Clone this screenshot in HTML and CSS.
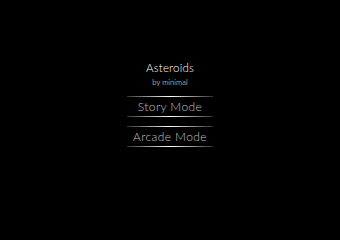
FILE: index.html
```html
<!DOCTYPE html>
<html>
<head>
<meta charset="utf-8">
<link rel="stylesheet" href="styles.css">
</head>
<body>
<div class="screen">
  <div class="menu">
    <div class="title">Asteroids</div>
    <div class="subtitle">by minimal</div>
    <div class="rule"></div>
    <div class="item">Story Mode</div>
    <div class="rule"></div>
    <div class="gap"></div>
    <div class="rule"></div>
    <div class="item">Arcade Mode</div>
    <div class="rule"></div>
  </div>
</div>
</body>
</html>
```
FILE: styles.css
```css
html, body {
  margin: 0;
  padding: 0;
  background: #000;
}
.screen {
  width: 340px;
  height: 204px;
  display: flex;
  justify-content: center;
  background: #000;
  font-family: "Lato", "DejaVu Sans", sans-serif;
  color: #d8d8d8;
}
.menu {
  width: 86px;
  padding-top: 61px;
  display: flex;
  flex-direction: column;
  align-items: center;
}
.title {
  font-size: 11.5px;
  line-height: 13px;
  font-weight: 300;
  color: #ffffff;
  letter-spacing: 0.2px;
}
.subtitle {
  font-size: 7.5px;
  line-height: 9px;
  margin-top: 4px;
  font-weight: 300;
  color: #f0f0f0;
  letter-spacing: 0.1px;
}
.rule {
  width: 86px;
  height: 1px;
  background: linear-gradient(to right, rgba(255,255,255,0.2), #ffffff 50%, rgba(255,255,255,0.2));
}
.subtitle + .rule {
  margin-top: 9px;
}
.item {
  font-size: 12px;
  line-height: 19px;
  font-weight: 300;
  color: #c4c4c4;
  letter-spacing: 0.4px;
}
.gap {
  height: 9px;
}
```
